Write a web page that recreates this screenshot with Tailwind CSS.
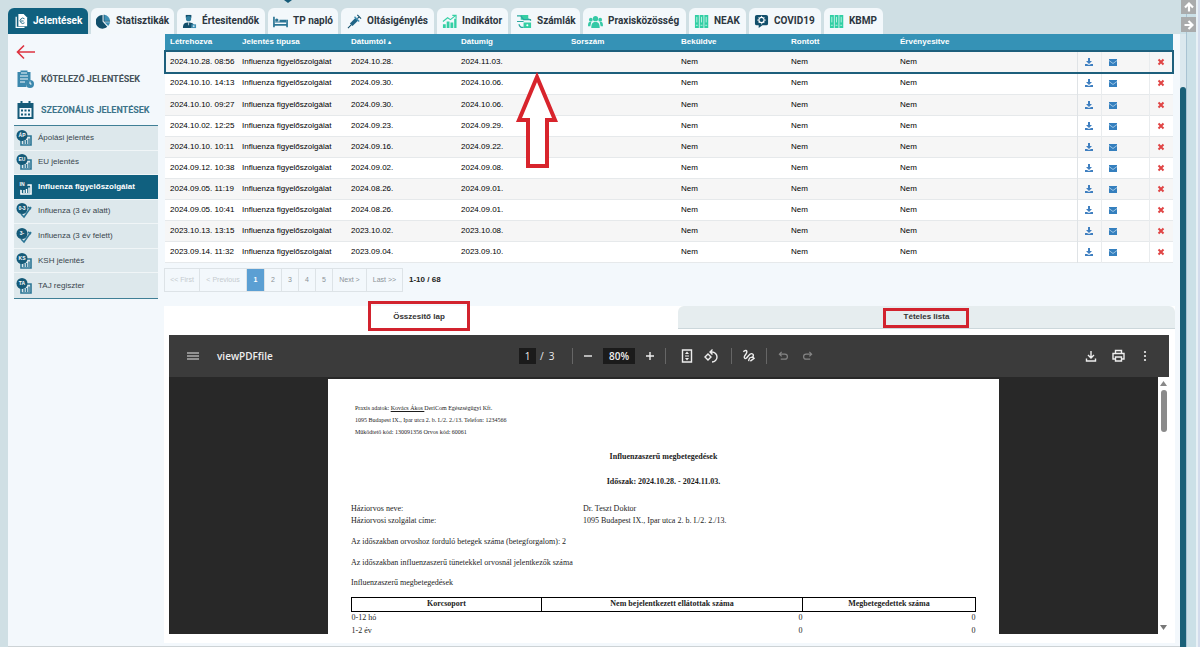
<!DOCTYPE html>
<html lang="hu">
<head>
  <meta charset="UTF-8" />
  <meta name="viewport" content="width=device-width, initial-scale=1.0"/>
  <title>Jelentések - Influenza figyelőszolgálat</title>

  <!-- Tailwind CSS -->
  <script src="https://cdn.jsdelivr.net/npm/@tailwindcss/browser@4"></script>
</head>
<body class="h-screen overflow-hidden bg-[#cfdfe4] font-['Liberation_Sans',Arial,sans-serif] text-[8px] leading-3 text-[#222]">

<!-- Icons -->
<svg class="hidden">
  <symbol id="i-files" viewBox="0 0 16 16"><path fill="#fff" d="M5 0h6l4 4v10H5z"/><path fill="none" stroke="#fff" stroke-width="1.400" d="M2.500 3v12.200H12"/><path d="M12 5.500a3 3 0 1 0 0 4.500M8 8h3" fill="none" stroke="#10607f"/></symbol>
  <symbol id="i-pie" viewBox="0 0 16 16"><path fill="#124f6b" d="M7 1v7l5 5.500A7.300 7.300 0 1 1 7 1z"/><path fill="#3f90b5" d="M8.500.8A7 7 0 0 1 15 7.500H8.500zM9 8.800h6a7 7 0 0 1-2 4z"/><path fill="none" stroke="#124f6b" stroke-width=".8" d="M8.500.8v7H15"/></symbol>
  <symbol id="i-doctor" viewBox="0 0 16 16"><path fill="#124f6b" d="M4 1h6v3H4z"/><circle cx="7" cy="5" r="2.800" fill="#2f7f9f"/><path fill="#124f6b" d="M1 15c0-5 2-6 6-6s5 1 5.500 3L10 15z"/><path fill="#3f90b5" d="M10 11h5v4h-5z"/><path stroke="#fff" stroke-width=".7" d="M12.500 12v2M11.500 13h2M7 9v3"/></symbol>
  <symbol id="i-bed" viewBox="0 0 16 16"><path fill="none" stroke="#2b7595" stroke-width="1.800" d="M1 3v11M1 11.500h14M15 6v8"/><circle cx="4" cy="6.500" r="1.800" fill="#2b7595"/><path fill="#2b7595" d="M7 6h7v3H2V8h5z"/></symbol>
  <symbol id="i-syringe" viewBox="0 0 16 16"><path stroke="#124f6b" stroke-width="1.200" d="m1 15 4-4M11 1l4 4M13 3l-2 2"/><path stroke="#1f6486" stroke-width="4" d="m4.500 11.500 6-6"/><path stroke="#3f90b5" stroke-width="1.500" d="m8 3 5 5"/></symbol>
  <symbol id="i-chart" viewBox="0 0 16 16"><path fill="#35cfa4" d="M1 11h3v4H1zM5 8h3v7H5zM9 9h3v6H9zM13 5h2.500v10H13z"/><path fill="none" stroke="#35cfa4" stroke-width="1.200" d="m1 8 5-4 3 2 5-4M11 1.500h4V5"/></symbol>
  <symbol id="i-bills" viewBox="0 0 16 16"><path fill="#35cfa4" d="M4 1h8v5H4zM7 9h8v6H7z"/><path fill="none" stroke="#2ba9a0" stroke-width="1.300" d="M0 2h4l3 4h8M0 8h7M2 11c1 3 3 4 5 3M12 5l3 2"/><circle cx="11" cy="12" r="1.100" fill="#fff"/></symbol>
  <symbol id="i-group" viewBox="0 0 16 16"><g fill="#35c9a6"><circle cx="8" cy="5" r="2.800"/><circle cx="3" cy="6" r="2"/><circle cx="13" cy="6" r="2"/><path d="M3.500 15c0-5 1.500-6.500 4.500-6.500s4.500 1.500 4.500 6.500zM0 13c0-4 1-5 3.500-4.500L2.500 13zM16 13c0-4-1-5-3.500-4.500l1 4.500z"/></g></symbol>
  <symbol id="i-columns" viewBox="0 0 16 16"><path fill="#30cfa4" d="M1 1h4.200v14H1zM6 1h4.200v14H6zM11 1h4.200v14H11z"/><path stroke="#bdf2e3" d="M3 3v6M8 3v6M13 3v6M2 12h2M7 12h2M12 12h2"/></symbol>
  <symbol id="i-covid" viewBox="0 0 16 16"><path fill="#124f6b" d="M3 1h10q2 0 2 2v7q0 2-2 2H9l-4 3v-3H3q-2 0-2-2V3q0-2 2-2z"/><circle cx="8" cy="6.500" r="2.800" fill="none" stroke="#fff" stroke-width="1.300"/><path stroke="#fff" d="M8 2v1M8 10v1M3.500 6.500h1M11.500 6.500h1M5 3.500l1 1M11 9.500l-1-1M11 3.500l-1 1M5 9.500l1-1"/></symbol>
  <symbol id="i-clip" viewBox="0 0 18 20"><path fill="#3b88ad" d="M1 3h3V1.500h7V3h3v8a5 5 0 0 0-4 7H1z"/><path stroke="#f3f8fc" d="M3.500 7h8M3.500 10h8M3.500 13h5M4.500 4h6"/><circle cx="13.500" cy="15" r="4" fill="#3b88ad"/><path fill="none" stroke="#fff" d="M13.500 12.500V15H15"/></symbol>
  <symbol id="i-calendar" viewBox="0 0 18 20"><path fill="#155a78" d="M1 3h3V1h2v2h6V1h2v2h3v16H1z"/><path fill="#f3f8fc" d="M3 8h12v9H3z"/><path stroke="#155a78" stroke-width="2" stroke-dasharray="2 1.500" d="M4.500 10.500h9.500M4.500 14.500h9.500"/></symbol>
  <symbol id="i-report" viewBox="0 0 16 16"><path fill="none" stroke="currentColor" stroke-width="1.600" d="M5 9v6h10V6h-4"/><path stroke="currentColor" stroke-width="1.400" d="M8 14v-3M10.500 14v-4M13 14V8.500"/><circle cx="6" cy="5.500" r="5.500" fill="#155a78"/></symbol>
  <symbol id="i-shot" viewBox="0 0 16 16"><path fill="none" stroke="#2b7595" stroke-width="1.600" d="m5 11 3 3 7-10M12 4l3 2"/><circle cx="6" cy="5.500" r="5.500" fill="#155a78"/></symbol>
  <symbol id="i-download" viewBox="0 0 10 10"><path fill="#3f7fc0" d="M4 1h2v3h2L5 7 2 4h2zM1 7h2l2 1 2-1h2v2H1z"/></symbol>
  <symbol id="i-mail" viewBox="0 0 10 10"><path fill="#347fbe" d="M1 2h8v7H1z"/><path fill="none" stroke="#b9d5ec" stroke-width=".8" d="m1 3.500 4 3 4-3"/></symbol>
  <symbol id="i-delete" viewBox="0 0 10 10"><path stroke="#e04444" stroke-width="2" d="m2.500 2.500 5 5M7.500 2.500l-5 5"/></symbol>
</svg>

<div class="flex h-full">

  <!-- Main area -->
  <div class="flex min-w-0 flex-1 flex-col pl-2">

    <!-- Top tabs -->
    <nav class="relative flex shrink-0 gap-[3px] pt-2 font-['Roboto',sans-serif] text-[10px] font-bold text-[#2c3640]">
      <svg class="absolute left-[276px] top-0 h-1 w-2" viewBox="0 0 8 4"><path fill="#155a78" d="M0 0h8L4 3z"/></svg>
      <a href="#" class="flex h-[26px] w-20 items-center gap-[5px] rounded-t-md bg-[#10607f] px-[6px] text-white"><svg class="size-[14px] shrink-0"><use href="#i-files"/></svg>Jelentések</a>
      <a href="#" class="flex h-[26px] w-[83px] items-center gap-[5px] rounded-t-md bg-[#f3f8fb] px-[5px]"><svg class="size-[15px] shrink-0"><use href="#i-pie"/></svg>Statisztikák</a>
      <a href="#" class="flex h-[26px] w-[88px] items-center gap-[5px] rounded-t-md bg-[#f3f8fb] px-[5px]"><svg class="size-[15px] shrink-0"><use href="#i-doctor"/></svg>Értesitendők</a>
      <a href="#" class="flex h-[26px] w-[70px] items-center gap-[5px] rounded-t-md bg-[#f3f8fb] px-[5px]"><svg class="size-[15px] shrink-0"><use href="#i-bed"/></svg>TP napló</a>
      <a href="#" class="flex h-[26px] w-[93px] items-center gap-[5px] rounded-t-md bg-[#f3f8fb] px-[6px]"><svg class="size-[15px] shrink-0"><use href="#i-syringe"/></svg>Oltásigénylés</a>
      <a href="#" class="flex h-[26px] w-[71px] items-center gap-[5px] rounded-t-md bg-[#f3f8fb] px-[5px]"><svg class="size-[15px] shrink-0"><use href="#i-chart"/></svg>Indikátor</a>
      <a href="#" class="flex h-[26px] w-[69px] items-center gap-[5px] rounded-t-md bg-[#f3f8fb] px-[6px]"><svg class="size-[15px] shrink-0"><use href="#i-bills"/></svg>Számlák</a>
      <a href="#" class="flex h-[26px] w-[103px] items-center gap-[5px] rounded-t-md bg-[#f3f8fb] px-[5px]"><svg class="size-[15px] shrink-0"><use href="#i-group"/></svg>Praxisközösség</a>
      <a href="#" class="flex h-[26px] w-[57px] items-center gap-[5px] rounded-t-md bg-[#f3f8fb] px-[5px]"><svg class="size-[15px] shrink-0"><use href="#i-columns"/></svg>NEAK</a>
      <a href="#" class="flex h-[26px] w-[72px] items-center gap-[5px] rounded-t-md bg-[#f3f8fb] px-[5px]"><svg class="size-[15px] shrink-0"><use href="#i-covid"/></svg>COVID19</a>
      <a href="#" class="flex h-[26px] w-[59px] items-center gap-[5px] rounded-t-md bg-[#f3f8fb] px-[5px]"><svg class="size-[15px] shrink-0"><use href="#i-columns"/></svg>KBMP</a>
    </nav>

    <div class="flex min-h-0 flex-1 border-b border-[#cdd3d6] bg-[#f3f8fc]">

      <!-- Sidebar -->
      <aside class="w-[156px] shrink-0 pl-[6px] pr-[6px] pt-[10px]">
        <a href="#" aria-label="Vissza" class="block pl-[2px]"><svg class="h-4 w-5" viewBox="0 0 20 16" fill="none" stroke="#dd3340" stroke-width="1.600"><path d="M19 8H2M8 1.500 1.500 8 8 14.500"/></svg></a>
        <a href="#" class="mt-[3px] flex h-8 items-center gap-[6px] pl-[2px] font-['Roboto',sans-serif] text-[9px] font-bold text-[#46525a]"><svg class="h-5 w-[19px]"><use href="#i-clip"/></svg>KÖTELEZŐ JELENTÉSEK</a>
        <a href="#" class="flex h-[30px] items-center gap-[6px] pl-[2px] font-['Roboto',sans-serif] text-[9px] font-bold text-[#3c7389]"><svg class="h-5 w-[19px]"><use href="#i-calendar"/></svg>SZEZONÁLIS JELENTÉSEK</a>
        <ul id="sidemenu" class="grid h-[174px] grid-rows-7 border-y border-[#3f7f96] bg-[#dde8ec]"></ul>
      </aside>

      <!-- Content -->
      <main class="flex min-w-0 flex-1 flex-col pr-[5px]">
        <div class="relative pl-px pr-[2px]">
          <table class="w-full table-fixed border-collapse text-left">
            <colgroup>
              <col class="w-[72px]"><col class="w-[109px]"><col class="w-[110px]"><col class="w-[110px]"><col class="w-[110px]"><col class="w-[110px]"><col class="w-[109px]"><col><col class="w-6"><col class="w-12"><col class="w-6">
            </colgroup>
            <thead>
              <tr class="h-[17px] bg-[#3592b6] text-white">
                <th class="pb-[2px] pl-[5px]">Létrehozva</th>
                <th class="pb-[2px] pl-[5px]">Jelentés típusa</th>
                <th class="pb-[2px] pl-[5px]">Dátumtól <span class="text-[6px]">▴</span></th>
                <th class="pb-[2px] pl-[5px]">Dátumig</th>
                <th class="pb-[2px] pl-[5px]">Sorszám</th>
                <th class="pb-[2px] pl-[5px]">Beküldve</th>
                <th class="pb-[2px] pl-[5px]">Rontott</th>
                <th class="pb-[2px] pl-[5px]">Érvényesitve</th>
                <th colspan="3"></th>
              </tr>
            </thead>
            <tbody id="reports"></tbody>
          </table>
          <!-- Pointer to the selected row -->
          <svg class="absolute left-[351px] top-[38px] h-[98px] w-[44px]" viewBox="0 0 44 98"><path fill="#fff" stroke="#d8242c" stroke-width="4" d="M22 5 40 48H32V94H13V48H4z"/></svg>
        </div>

        <!-- Pager -->
        <div class="mt-[5px] flex h-6 shrink-0 items-center">
          <div class="flex h-full divide-x divide-[#dde3e7] border border-[#dde3e7] text-[7px] text-[#8c9398]">
            <button class="w-[35px] text-[#c5cbcf]">&lt;&lt; First</button>
            <button class="w-[47px] text-[#c5cbcf]">&lt; Previous</button>
            <button class="w-[18px] bg-[#5b9fd3] font-bold text-white">1</button>
            <button class="w-[17px]">2</button>
            <button class="w-[17px]">3</button>
            <button class="w-[17px]">4</button>
            <button class="w-[17px]">5</button>
            <button class="w-[34px]">Next &gt;</button>
            <button class="w-[35px]">Last &gt;&gt;</button>
          </div>
          <span class="pl-[6px] font-bold">1-10 / 68</span>
        </div>

        <!-- Report view -->
        <section class="mb-[3px] mt-[14px] flex min-h-0 flex-1 flex-col bg-white">
          <div class="flex h-[23px] shrink-0 text-[8px] font-bold text-[#333]">
            <button class="relative flex-[512] pr-1"><span class="absolute left-1/2 -top-[5px] -ml-[2px] h-[30px] w-[102px] -translate-x-1/2 border-[3px] border-[#d2232e]"></span>Összesitő lap</button>
            <button class="relative flex-[499] rounded-t-md border-b border-[#ccd7db] bg-[#e6edef]"><span class="absolute left-1/2 top-[2px] h-5 w-[86px] -translate-x-1/2 border-[3px] border-[#d2232e]"></span>Tételes lista</button>
          </div>

          <div class="mb-[9px] ml-[5px] mr-[6px] mt-[6px] flex min-h-0 flex-1 flex-col">
            <!-- Viewer toolbar -->
            <div class="grid h-[42px] shrink-0 grid-cols-[350px_1fr_auto] items-center bg-[#3b3b3b] font-['Open_Sans',sans-serif] text-[10px] text-[#eee]">
              <div class="flex items-center gap-[18px] pl-[18px]">
                <button aria-label="Menü"><svg class="h-2 w-3" viewBox="0 0 12 8" stroke="#e8e8e8" stroke-width="1.200"><path d="M0 1h12M0 4h12M0 7h12"/></svg></button>
                <span class="font-semibold">viewPDFfile</span>
              </div>
              <div class="flex items-center">
                <input aria-label="Oldal" value="1" class="h-4 w-[17px] bg-[#1b1b1b] text-center text-[10px]" />
                <span class="w-[36px] pl-1">/&nbsp; 3</span>
                <i class="h-4 w-px bg-[#666]"></i>
                <button aria-label="Kicsinyítés" class="w-[30px]"><svg class="mx-auto size-[10px]" viewBox="0 0 10 10" stroke="#eee" stroke-width="1.400"><path d="M1 5h8"/></svg></button>
                <input aria-label="Nagyítás" value="80%" class="h-4 w-8 bg-[#1b1b1b] text-center text-[10px] font-semibold" />
                <button aria-label="Nagyítás növelése" class="w-[30px]"><svg class="mx-auto size-[10px]" viewBox="0 0 10 10" stroke="#eee" stroke-width="1.400"><path d="M1 5h8M5 1v8"/></svg></button>
                <i class="h-4 w-px bg-[#666]"></i>
                <button aria-label="Oldalhoz igazítás" class="ml-[14px] w-[14px]"><svg class="size-[14px]" viewBox="0 0 14 14"><path fill="none" stroke="#eee" stroke-width="1.400" d="M2.500 1h9v12h-9z"/><path fill="#eee" d="m7 2.500 2 2.500H5zM7 11.500 9 9H5zM5 6.500h4v1H5z"/></svg></button>
                <button aria-label="Forgatás" class="ml-[10px] w-[14px]"><svg class="size-[14px]" viewBox="0 0 14 14" fill="none" stroke="#eee" stroke-width="1.400"><path d="m4 5 3 3-3 3-3-3zM6 3h2a5 5 0 0 1 0 10M8.500.5 6 3l2.500 2.500"/></svg></button>
                <i class="ml-[13px] h-4 w-px bg-[#666]"></i>
                <button aria-label="Rajzolás" class="ml-[10px] w-[14px]"><svg class="size-[13px]" viewBox="0 0 14 14" fill="none" stroke="#eee" stroke-width="1.500"><path d="M1.500 3C3 1 6 1 5 4s-4 4-2 6 4-5 7-5 3 4 0 4-2 2-3 4M11 8l2 2-4 3"/></svg></button>
                <i class="ml-[10px] h-4 w-px bg-[#666]"></i>
                <button aria-label="Visszavonás" class="ml-[11px] w-3"><svg class="size-[11px]" viewBox="0 0 12 12" fill="none" stroke="#858585" stroke-width="1.300"><path d="M4 2 1.500 4.500 4 7M2 4.500h5.500a2.700 2.700 0 0 1 0 5.500H3"/></svg></button>
                <button aria-label="Ismét" class="ml-[12px] w-3"><svg class="size-[11px]" viewBox="0 0 12 12" fill="none" stroke="#858585" stroke-width="1.300"><path d="m8 2 2.500 2.500L8 7M10 4.500H4.500a2.700 2.700 0 0 0 0 5.500H9"/></svg></button>
              </div>
              <div class="flex items-center gap-[15px] pr-[19px]">
                <button aria-label="Letöltés"><svg class="size-3" viewBox="0 0 12 12" fill="none" stroke="#eee" stroke-width="1.400"><path d="M6 1v6.500M3 5l3 3 3-3M1.500 8.500V11h9V8.500"/></svg></button>
                <button aria-label="Nyomtatás"><svg class="size-[13px]" viewBox="0 0 13 13" fill="none" stroke="#eee" stroke-width="1.400"><path d="M3.500 4V1.500h6V4M3 10H1V4.500h11V10h-2M3.500 8h6v4h-6z"/></svg></button>
                <button aria-label="Továbbiak"><svg class="h-3 w-[10px]" viewBox="0 0 10 12" fill="#eee"><circle cx="5" cy="2" r="1.100"/><circle cx="5" cy="6" r="1.100"/><circle cx="5" cy="10" r="1.100"/></svg></button>
              </div>
            </div>

            <div class="flex min-h-0 flex-1">
              <!-- PDF page -->
              <div class="flex min-w-0 flex-1 justify-center overflow-hidden bg-[#282828] pt-[2px]">
                <article class="w-[671px] shrink-0 bg-white px-[23px] pt-[23px] font-['Liberation_Serif',serif] text-[8px] text-[#1c1c1c]">
                  <div class="pl-1 text-[6px]">
                    <p>Praxis adatok: <u>Kovács Ákos </u>DeriCom Egészségügyi Kft.</p>
                    <p>1095 Budapest IX., Ipar utca 2. b. I./2. 2./13. Telefon: 1234566</p>
                    <p>Működtető kód: 130091356 Orvos kód: 60061</p>
                  </div>
                  <h1 class="mt-[13px] text-center font-bold">Influenzaszerű megbetegedések</h1>
                  <h2 class="mt-[13px] text-center font-bold">Időszak: 2024.10.28. - 2024.11.03.</h2>
                  <dl class="mt-[15px] grid grid-cols-[232px_1fr]">
                    <dt>Háziorvos neve:</dt><dd>Dr. Teszt Doktor</dd>
                    <dt>Háziorvosi szolgálat címe:</dt><dd>1095 Budapest IX., Ipar utca 2. b. I./2. 2./13.</dd>
                  </dl>
                  <p class="mt-[9px]">Az időszakban orvoshoz forduló betegek száma (betegforgalom): 2</p>
                  <p class="mt-[9px]">Az időszakban influenzaszerű tünetekkel orvosnál jelentkezők száma</p>
                  <p class="mt-[8px]">Influenzaszerű megbetegedések</p>
                  <table class="mt-[8px] w-full table-fixed border-collapse">
                    <colgroup><col class="w-[190px]"><col class="w-[261px]"><col></colgroup>
                    <tr class="h-[14px]">
                      <th class="border border-black">Korcsoport</th>
                      <th class="border border-black">Nem bejelentkezett ellátottak száma</th>
                      <th class="border border-black">Megbetegedettek száma</th>
                    </tr>
                    <tr class="h-[13px]"><td>0-12 hó</td><td class="text-right">0</td><td class="text-right">0</td></tr>
                    <tr class="h-[13px]"><td>1-2 év</td><td class="text-right">0</td><td class="text-right">0</td></tr>
                  </table>
                </article>
              </div>
              <!-- Viewer scrollbar -->
              <div class="flex w-[11px] flex-col items-center bg-white py-1">
                <svg class="h-[5px] w-[7px]" viewBox="0 0 7 5"><path fill="#888" d="M3.500 0 7 5H0z"/></svg>
                <div class="mt-1 h-[42px] w-[6px] rounded-full bg-[#8a8a8a]"></div>
                <svg class="mt-auto h-[5px] w-[7px]" viewBox="0 0 7 5"><path fill="#777" d="M0 0h7L3.500 5z"/></svg>
              </div>
            </div>
          </div>
        </section>
      </main>
    </div>
  </div>

  <!-- Window scroll strip -->
  <div class="relative flex w-5 shrink-0 bg-[#cbe0e7]">
    <div class="mt-[34px] w-[6px] bg-[#dbe8ee] pt-[53px]"><div class="h-full rounded-t-full bg-[#1a6078]"></div></div>
    <div class="w-px bg-[#a9c3d2]"></div>
    <div class="ml-[9px] w-[2px] bg-[#e8f1f6]"></div>
    <div class="flex-1 bg-[#d3dcec]"></div>
    <button aria-label="Fel" class="absolute left-px top-0 flex h-[14px] w-[15px] items-center justify-center bg-[#a9abac]"><svg class="size-[10px]" viewBox="0 0 10 10" fill="none" stroke="#fff" stroke-width="2.200"><path d="M5 9.500V2M1 5.500l4-4 4 4"/></svg></button>
    <button aria-label="Jobbra" class="absolute left-px top-[17px] flex h-[15px] w-[15px] items-center justify-center bg-[#a9abac]"><svg class="size-[10px]" viewBox="0 0 10 10" fill="none" stroke="#fff" stroke-width="2.200"><path d="M.5 5H8M4.500 1l4 4-4 4"/></svg></button>
  </div>
</div>

<script>
  const menu = [
    ["Ápolási jelentés", "i-report", "ÁP"],
    ["EU jelentés", "i-report", "EU"],
    ["Influenza figyelőszolgálat", "i-report", "IN"],
    ["Influenza (3 év alatt)", "i-shot", "0-3"],
    ["Influenza (3 év felett)", "i-shot", "3-"],
    ["KSH jelentés", "i-report", "KS"],
    ["TAJ regiszter", "i-report", "TA"]
  ];
  document.getElementById("sidemenu").innerHTML = menu.map(([label, icon, badge], i) => `
    <li class="flex border-b border-[#f0f5f7] last:border-b-0">
      <a href="#" class="flex flex-1 items-center gap-[6px] pl-[2px] ${i === 2 ? "bg-[#10607f] font-bold text-white" : "text-[#39464d]"}">
        <svg class="size-4 ${i === 2 ? "text-white" : "text-[#2b7595]"}" viewBox="0 0 16 16"><use href="#${icon}"/><text x="6" y="7" text-anchor="middle" font-size="5" font-weight="bold" fill="#fff">${badge}</text></svg>
        ${label}
      </a>
    </li>`).join("");

  const reports = [
    ["2024.10.28. 08:56", "2024.10.28.", "2024.11.03."],
    ["2024.10.10. 14:13", "2024.09.30.", "2024.10.06."],
    ["2024.10.10. 09:27", "2024.09.30.", "2024.10.06."],
    ["2024.10.02. 12:25", "2024.09.23.", "2024.09.29."],
    ["2024.10.10. 10:11", "2024.09.16.", "2024.09.22."],
    ["2024.09.12. 10:38", "2024.09.02.", "2024.09.08."],
    ["2024.09.05. 11:19", "2024.08.26.", "2024.09.01."],
    ["2024.09.05. 10:41", "2024.08.26.", "2024.09.01."],
    ["2023.10.13. 13:15", "2023.10.02.", "2023.10.08."],
    ["2023.09.14. 11:32", "2023.09.04.", "2023.09.10."]
  ];
  document.getElementById("reports").innerHTML = reports.map(([created, from, to], i) => `
    <tr class="whitespace-nowrap text-black ${i === 0 ? "h-[22px] bg-[#f6f6f6] outline-2 -outline-offset-1 outline-[#1d5f7c]" : "h-[21px] border-b border-[#e6e9eb] odd:bg-[#f6f6f6] even:bg-white"}">
      <td class="pl-[5px]">${created}</td>
      <td class="pl-[5px]">Influenza figyelőszolgálat</td>
      <td class="pl-[5px]">${from}</td>
      <td class="pl-[5px]">${to}</td>
      <td></td>
      <td class="pl-[5px]">Nem</td>
      <td class="pl-[5px]">Nem</td>
      <td class="pl-[5px]">Nem</td>
      <td class="border-l border-[#dfe3e6]"><button aria-label="Letöltés" class="mx-auto block"><svg class="size-[10px]"><use href="#i-download"/></svg></button></td>
      <td class="border-l border-[#e9ecee] pl-[6px]"><button aria-label="Küldés" class="block"><svg class="size-[10px]"><use href="#i-mail"/></svg></button></td>
      <td class="border-l border-[#e9ecee]"><button aria-label="Törlés" class="mx-auto block"><svg class="size-[10px]"><use href="#i-delete"/></svg></button></td>
    </tr>`).join("");
</script>

</body>
</html>
